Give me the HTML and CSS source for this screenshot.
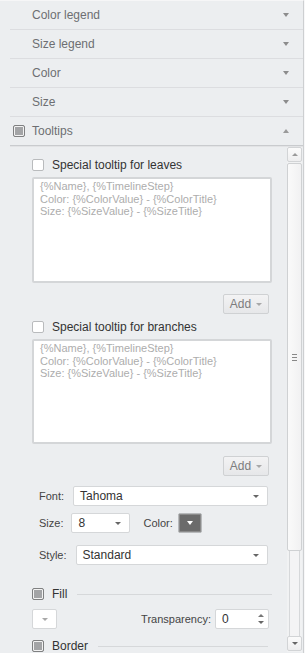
FILE: index.html
```html
<!DOCTYPE html>
<html lang="en">
<head>
    <meta charset="UTF-8">
    <meta name="viewport" content="width=device-width, initial-scale=1.0">
    <title>Tooltips settings</title>
    <link rel="stylesheet" href="styles.css">
</head>
<body>
<div class="panel">
    <!-- Accordion headers -->
    <div class="acc-row"><span class="acc-title">Color legend</span><span class="arrow-down"></span></div>
    <div class="acc-row"><span class="acc-title">Size legend</span><span class="arrow-down"></span></div>
    <div class="acc-row"><span class="acc-title">Color</span><span class="arrow-down"></span></div>
    <div class="acc-row"><span class="acc-title">Size</span><span class="arrow-down"></span></div>
    <div class="acc-row acc-open">
        <span class="check check-gray"></span>
        <span class="acc-title">Tooltips</span>
        <span class="arrow-up"></span>
    </div>

    <div class="body-area">
        <div class="body-content">
            <div class="check-row first">
                <span class="check"></span>
                <span class="check-label">Special tooltip for leaves</span>
            </div>
            <div class="tip-box">
                <div>{%Name}, {%TimelineStep}</div>
                <div>Color: {%ColorValue} - {%ColorTitle}</div>
                <div>Size: {%SizeValue} - {%SizeTitle}</div>
            </div>
            <div class="btn-row">
                <span class="add-btn">Add <span class="tri tri-light"></span></span>
            </div>

            <div class="check-row second">
                <span class="check"></span>
                <span class="check-label">Special tooltip for branches</span>
            </div>
            <div class="tip-box tip-box-2">
                <div>{%Name}, {%TimelineStep}</div>
                <div>Color: {%ColorValue} - {%ColorTitle}</div>
                <div>Size: {%SizeValue} - {%SizeTitle}</div>
            </div>
            <div class="btn-row btn-row-2">
                <span class="add-btn">Add <span class="tri tri-light"></span></span>
            </div>

            <!-- Font settings -->
            <div class="field-row font-row">
                <span class="field-label">Font:</span>
                <span class="select select-font">Tahoma<span class="tri"></span></span>
            </div>
            <div class="field-row size-row">
                <span class="field-label">Size:</span>
                <span class="select select-size">8<span class="tri"></span></span>
                <span class="field-label color-label">Color:</span>
                <span class="color-btn"><span class="tri tri-white"></span></span>
            </div>
            <div class="field-row style-row">
                <span class="field-label">Style:</span>
                <span class="select select-style">Standard<span class="tri"></span></span>
            </div>

            <div class="group-row fill-row">
                <span class="check check-gray"></span>
                <span class="check-label">Fill</span>
                <span class="group-line"></span>
            </div>
            <div class="fill-controls">
                <span class="small-drop"><span class="tri tri-light"></span></span>
                <span class="transp">
                    <span class="field-label">Transparency:</span>
                    <span class="spin">0
                        <span class="spin-arrows"><span class="tri-up"></span><span class="tri tri-small"></span></span>
                    </span>
                </span>
            </div>
            <div class="group-row border-row">
                <span class="check check-gray"></span>
                <span class="check-label">Border</span>
                <span class="group-line"></span>
            </div>
        </div>

        <!-- Scrollbar -->
        <div class="scrollbar">
            <div class="sb-btn"><span class="tri-up"></span></div>
            <div class="sb-thumb"><span class="grip"></span></div>
            <div class="sb-track"></div>
            <div class="sb-btn sb-btn-down"><span class="tri tri-dark"></span></div>
        </div>
    </div>
</div>
</body>
</html>
```

FILE: styles.css
```css
body {
    margin: 0;
    background-color: #f7f7f8;
    font-family: "Liberation Sans", Arial, sans-serif;
    font-size: 11px;
}

.panel {
    width: 303px;
    height: 652px;
    background-color: #eceef0;
    border-top: 1px solid #f6f6f7;
    border-right: 1px solid #cdcfd1;
    overflow: hidden;
}

/* Accordion rows */
.acc-row {
    height: 28px;
    margin-left: 10px;
    padding-left: 22px;
    padding-right: 14px;
    display: flex;
    align-items: center;
    border-bottom: 1px solid #dcdde0;
    color: #6d6e72;
    font-size: 12px;
}

.acc-title {
    flex: 1;
}

.acc-open {
    padding-left: 3px;
    border-bottom: 1px solid #c9cbce;
    box-shadow: 0 1px 0 #e2e3e5;
}

.acc-open .check {
    margin-right: 7px;
}

.arrow-down {
    width: 0;
    height: 0;
    border-left: 3.5px solid transparent;
    border-right: 3.5px solid transparent;
    border-top: 4px solid #8c8c8c;
}

.arrow-up {
    width: 0;
    height: 0;
    border-left: 3.5px solid transparent;
    border-right: 3.5px solid transparent;
    border-bottom: 4px solid #9a9a9a;
}

/* Checkboxes */
.check {
    display: inline-block;
    width: 10px;
    height: 10px;
    border: 1px solid #b9bbbd;
    border-radius: 2px;
    background-color: #fff;
    flex-shrink: 0;
}

.check-gray {
    border-color: #7f8081;
    background-color: #a3a4a6;
    box-shadow: inset 0 0 0 1px #f2f2f2;
}

/* Body with fake scrollbar */
.body-area {
    display: flex;
    height: 505px;
    margin-top: 1px;
}

.body-content {
    flex: 1;
    padding-left: 32px;
    padding-right: 15px;
}

.check-row {
    display: flex;
    align-items: center;
    height: 12px;
}

.check-row.first {
    margin-top: 12px;
}

.check-row.second {
    margin-top: 7px;
}

.check-label {
    margin-left: 8px;
    color: #333;
    font-size: 12px;
}

.tip-box {
    margin-top: 6px;
    background-color: #fff;
    border: 2px solid #d4d6d8;
    border-radius: 2px;
    padding: 1px 6px;
    color: #adadad;
    line-height: 12.5px;
    box-sizing: border-box;
    height: 106px;
}

.tip-box-2 {
    height: 105px;
}

.btn-row {
    display: flex;
    justify-content: flex-end;
    margin-top: 11px;
    padding-right: 3px;
}

.btn-row-2 {
    margin-top: 12px;
}

.add-btn {
    display: flex;
    align-items: center;
    justify-content: center;
    gap: 5px;
    width: 44px;
    height: 18px;
    border: 1px solid #cfd1d3;
    border-radius: 2px;
    background: linear-gradient(#f3f3f4, #e6e7e9);
    color: #7d7d7d;
    font-size: 12px;
}

.tri {
    display: inline-block;
    width: 0;
    height: 0;
    border-left: 3px solid transparent;
    border-right: 3px solid transparent;
    border-top: 3px solid #666;
}

.tri-light {
    border-top-color: #a8a8a8;
}

.tri-white {
    border-top-color: #fff;
    border-left-width: 3.5px;
    border-right-width: 3.5px;
    border-top-width: 4px;
}

.tri-dark {
    border-top-color: #666;
}

.tri-small {
    border-left-width: 3px;
    border-right-width: 3px;
    border-top-width: 3px;
}

.tri-up {
    display: inline-block;
    width: 0;
    height: 0;
    border-left: 3px solid transparent;
    border-right: 3px solid transparent;
    border-bottom: 3px solid #777;
}

/* Form fields */
.field-row {
    display: flex;
    align-items: center;
    padding-left: 7px;
}

.font-row {
    margin-top: 10px;
}

.size-row {
    margin-top: 7px;
}

.style-row {
    margin-top: 12px;
}

.field-label {
    color: #444;
}

.select {
    display: flex;
    align-items: center;
    justify-content: space-between;
    height: 18px;
    padding: 0 8px 0 6px;
    background-color: #fff;
    border: 1px solid #d5d7d9;
    border-radius: 2px;
    color: #333;
    font-size: 12px;
}

.select-font {
    margin-left: 9px;
    width: 179px;
}

.select-size {
    margin-left: 8px;
    width: 43px;
}

.select-style {
    margin-left: 9px;
    width: 176px;
}

.color-label {
    margin-left: 13px;
}

.color-btn {
    display: flex;
    align-items: center;
    justify-content: center;
    margin-left: 5px;
    width: 22px;
    height: 18px;
    background-color: #6b6b6b;
    border: 1px solid #b7b9bb;
    border-radius: 2px;
    box-shadow: inset 0 0 0 1px #8a8a8a;
}

.group-row {
    display: flex;
    align-items: center;
    height: 12px;
}

.fill-row {
    margin-top: 23px;
}

.border-row {
    margin-top: 11px;
}

.group-line {
    flex: 1;
    height: 1px;
    margin-left: 10px;
    background-color: #d6d8da;
}

.border-row .group-line {
    margin-right: 4px;
}

.fill-controls {
    display: flex;
    justify-content: space-between;
    align-items: center;
    margin-top: 9px;
    padding-right: 3px;
}

.small-drop {
    display: flex;
    align-items: center;
    justify-content: center;
    width: 23px;
    height: 18px;
    background-color: #fff;
    border: 1px solid #d5d7d9;
    border-radius: 2px;
}

.transp {
    display: flex;
    align-items: center;
    gap: 4px;
}

.spin {
    display: flex;
    align-items: center;
    justify-content: space-between;
    width: 42px;
    height: 18px;
    padding: 0 4px 0 6px;
    background-color: #fff;
    border: 1px solid #d5d7d9;
    border-radius: 2px;
    color: #333;
    font-size: 12px;
}

.spin-arrows {
    display: flex;
    flex-direction: column;
    gap: 4px;
}

/* Scrollbar */
.scrollbar {
    width: 15px;
    margin-right: 1px;
    display: flex;
    flex-direction: column;
    background-color: #f1f2f3;
}

.sb-btn {
    height: 13px;
    width: 13px;
    display: flex;
    align-items: center;
    justify-content: center;
    border: 1px solid #d2d4d6;
    border-radius: 2px;
    background: linear-gradient(#fbfbfb, #eeeeef);
}

.sb-btn .tri-up {
    border-bottom-color: #9a9a9a;
}

.sb-btn-down {
    margin-bottom: 1px;
}

.sb-thumb {
    height: 386px;
    margin-top: 1px;
    display: flex;
    align-items: center;
    justify-content: center;
    border: 1px solid #cfd1d3;
    border-radius: 2px;
    background: linear-gradient(90deg, #fafafa, #f1f1f2);
}

.grip {
    width: 5px;
    height: 5px;
    border-top: 1px solid #888;
    border-bottom: 1px solid #888;
    background: linear-gradient(#888, #888) center / 5px 1px no-repeat;
}

.sb-track {
    flex: 1;
    margin: 0 2px;
    border-left: 1px solid #d6d8da;
    border-right: 1px solid #d6d8da;
    background-color: #f4f4f5;
}
```
